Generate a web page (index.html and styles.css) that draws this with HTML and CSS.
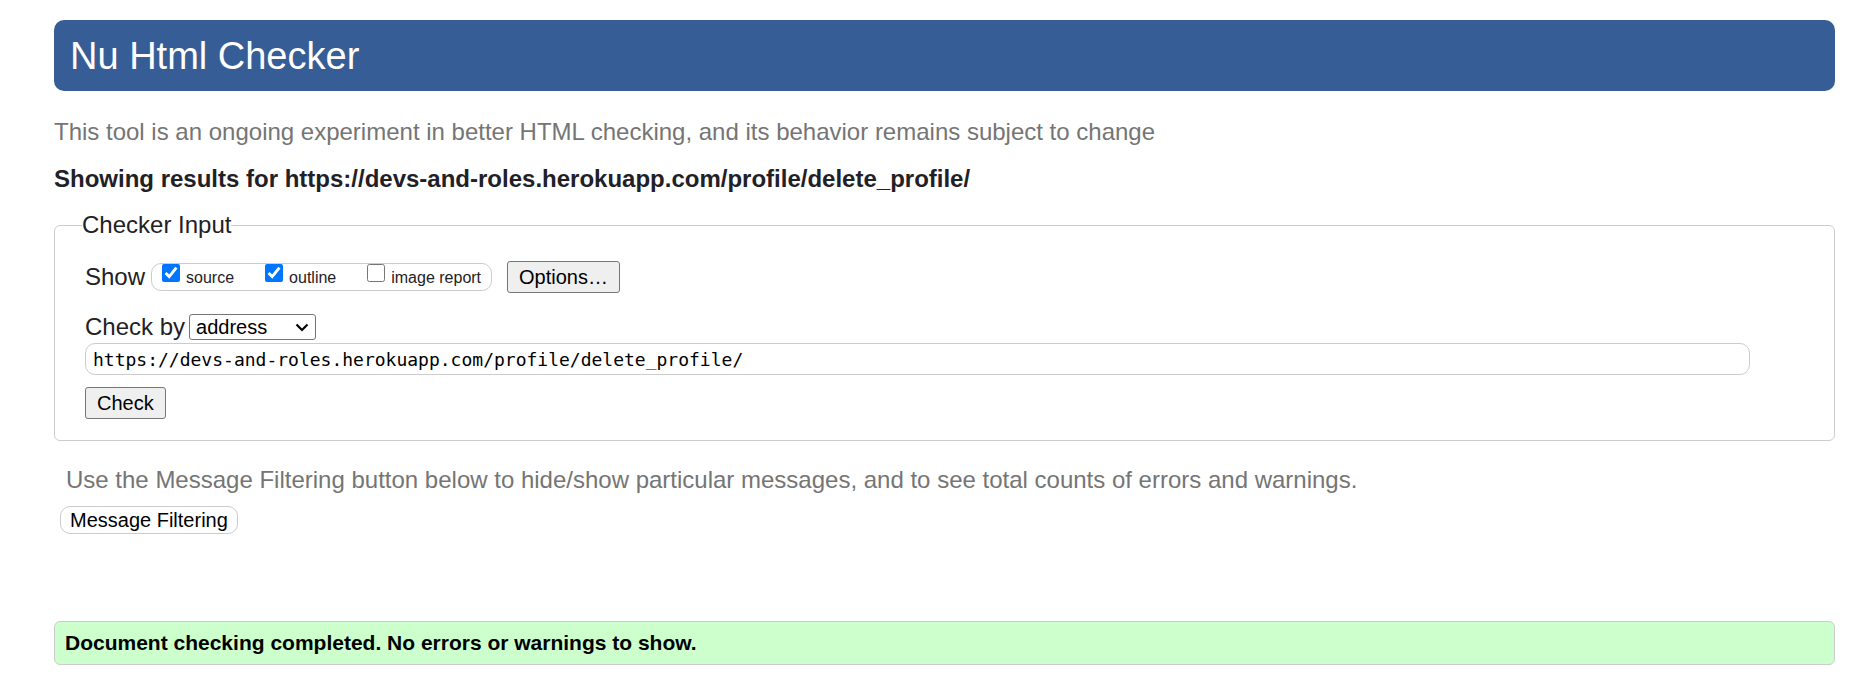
FILE: index.html
```html
<!DOCTYPE html>
<html lang="en">
<head>
<meta charset="utf-8">
<title>Nu Html Checker</title>
<link rel="stylesheet" href="styles.css">
</head>
<body>
<header class="banner"><h1 class="title">Nu Html Checker</h1></header>
<main class="page">
  <p class="note">This tool is an ongoing experiment in better HTML checking, and its behavior remains subject to change</p>
  <h2 class="results-for">Showing results for https://devs-and-roles.herokuapp.com/profile/delete_profile/</h2>
  <form>
    <fieldset class="checker">
      <legend class="legend">Checker Input</legend>
      <div class="show-row">
        <span>Show</span>
        <div class="toggles">
          <label class="toggle"><input class="box" type="checkbox" checked><span class="toggle-text">source</span></label>
          <label class="toggle"><input class="box" type="checkbox" checked><span class="toggle-text">outline</span></label>
          <label class="toggle"><input class="box" type="checkbox"><span class="toggle-text">image report</span></label>
        </div>
        <button class="button" type="button">Options…</button>
      </div>
      <div class="method-row">
        <label for="method">Check by</label>
        <span class="method-wrap">
          <select class="method" id="method">
            <option>address</option>
            <option>file upload</option>
            <option>text input</option>
          </select>
          <svg class="chevron" viewBox="0 0 14 9" aria-hidden="true"><path d="M1.5 1.5 7 7l5.500-5.500" fill="none" stroke="#000" stroke-width="2.200"/></svg>
        </span>
      </div>
      <input class="address" type="text" aria-label="Address" value="https://devs-and-roles.herokuapp.com/profile/delete_profile/" spellcheck="false">
      <button class="button" type="button">Check</button>
    </fieldset>
  </form>
  <section class="filtering">
    <p class="note hint">Use the Message Filtering button below to hide/show particular messages, and to see total counts of errors and warnings.</p>
    <button class="filter-button" type="button">Message Filtering</button>
  </section>
  <p class="success">Document checking completed. No errors or warnings to show.</p>
</main>
</body>
</html>
```
FILE: styles.css
```css
* {
  box-sizing: border-box;
}

body {
  margin: 20px 29px 10px 54px;
  background: #fff;
  color: #1f2126;
  font: 24px/28px "Liberation Sans", Arial, sans-serif;
}

.banner {
  padding: 14px 16px 13px;
  border-radius: 10px;
  background: #365d95;
  color: #fff;
}

.title {
  margin: 0;
  font-size: 38px;
  font-weight: 400;
  line-height: 44px;
}

.note {
  margin: 27px 0 0;
  color: #757575;
}

.results-for {
  margin: 19px 0 18px;
  font-size: 24px;
  font-weight: 700;
}

.checker {
  margin: 0;
  padding: 22px 84px 21px 30px;
  border: 1px solid #ccc;
  border-radius: 6px;
}

.legend {
  margin-left: -3px;
  padding: 0;
}

.show-row {
  display: flex;
  align-items: center;
  height: 32px;
}

.toggles {
  display: flex;
  gap: 31px;
  height: 28px;
  margin: 0 15px 0 6px;
  padding: 0 10px;
  border: 1px solid #ccc;
  border-radius: 10px;
}

.toggle {
  display: flex;
  gap: 6px;
  font-size: 16px;
}

.box {
  width: 18px;
  height: 18px;
  margin: 0;
}

.button {
  display: block;
  height: 32px;
  padding: 0 11px;
  border: 1px solid #767676;
  border-radius: 3px;
  background: #efefef;
  color: #000;
  font: 20px/24px "Liberation Sans", Arial, sans-serif;
}

.method-row {
  display: flex;
  align-items: center;
  gap: 4px;
  margin: 20px 0 2px;
}

.method-wrap {
  display: flex;
  position: relative;
}

.method {
  appearance: none;
  width: 127px;
  height: 26px;
  padding: 0 6px;
  border: 1px solid #767676;
  border-radius: 3px;
  background-color: #fff;
  color: #000;
  font: 20px/24px "Liberation Sans", Arial, sans-serif;
}

.chevron {
  position: absolute;
  top: 9px;
  right: 7px;
  width: 14px;
  height: 9px;
  pointer-events: none;
}

.address {
  display: block;
  width: 100%;
  height: 32px;
  margin-bottom: 12px;
  padding: 0 7px;
  border: 1px solid #ccc;
  border-radius: 10px;
  color: #000;
  font: 18px/24px "DejaVu Sans Mono", monospace;
}

.filtering {
  margin: 25px 6px 87px;
}

.hint {
  margin: 0 6px 12px;
}

.filter-button {
  display: block;
  height: 28px;
  padding: 0 9px;
  border: 1px solid #ccc;
  border-radius: 10px;
  background: #fff;
  color: #000;
  font: 20px/24px "Liberation Sans", Arial, sans-serif;
}

.success {
  margin: 0;
  padding: 7px 10px;
  border: 1px solid #ccc;
  border-radius: 6px;
  background: #cfc;
  color: #000;
  font-size: 21px;
  font-weight: 700;
  line-height: 28px;
}
```
